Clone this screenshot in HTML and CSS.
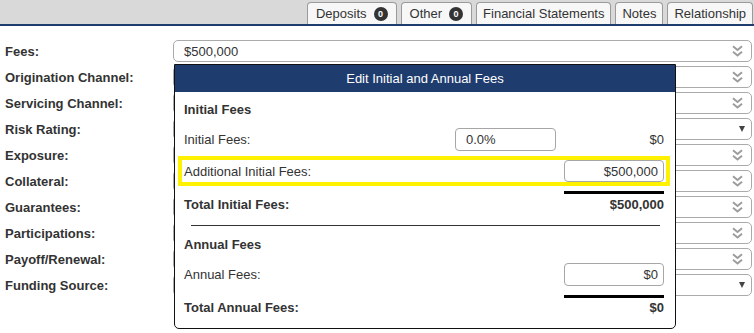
FILE: index.html
```html
<!DOCTYPE html>
<html lang="en">
<head>
    <meta charset="UTF-8">
    <meta name="viewport" content="width=device-width, initial-scale=1.0">
    <title>Loan Details - Fees</title>
    <link rel="stylesheet" href="styles.css">
</head>
<body>
    <div class="tabbar">
        <div class="tab counted">Deposits <span class="badge">0</span></div>
        <div class="tab counted">Other <span class="badge">0</span></div>
        <div class="tab">Financial Statements</div>
        <div class="tab">Notes</div>
        <div class="tab">Relationship</div>
    </div>

    <div class="fields">
        <div class="field-row">
            <label>Fees:</label>
            <div class="select">$500,000
                <svg class="chev" viewBox="0 0 11 12"><polyline points="1,1.2 5.5,5 10,1.2"/><polyline points="1,6.7 5.5,10.5 10,6.7"/></svg>
            </div>
        </div>
        <div class="field-row">
            <label>Origination Channel:</label>
            <div class="select"><svg class="chev" viewBox="0 0 11 12"><polyline points="1,1.2 5.5,5 10,1.2"/><polyline points="1,6.7 5.5,10.5 10,6.7"/></svg></div>
        </div>
        <div class="field-row">
            <label>Servicing Channel:</label>
            <div class="select"><svg class="chev" viewBox="0 0 11 12"><polyline points="1,1.2 5.5,5 10,1.2"/><polyline points="1,6.7 5.5,10.5 10,6.7"/></svg></div>
        </div>
        <div class="field-row">
            <label>Risk Rating:</label>
            <div class="select dropdown"><span class="caret"></span></div>
        </div>
        <div class="field-row">
            <label>Exposure:</label>
            <div class="select"><svg class="chev" viewBox="0 0 11 12"><polyline points="1,1.2 5.5,5 10,1.2"/><polyline points="1,6.7 5.5,10.5 10,6.7"/></svg></div>
        </div>
        <div class="field-row">
            <label>Collateral:</label>
            <div class="select"><svg class="chev" viewBox="0 0 11 12"><polyline points="1,1.2 5.5,5 10,1.2"/><polyline points="1,6.7 5.5,10.5 10,6.7"/></svg></div>
        </div>
        <div class="field-row">
            <label>Guarantees:</label>
            <div class="select"><svg class="chev" viewBox="0 0 11 12"><polyline points="1,1.2 5.5,5 10,1.2"/><polyline points="1,6.7 5.5,10.5 10,6.7"/></svg></div>
        </div>
        <div class="field-row">
            <label>Participations:</label>
            <div class="select"><svg class="chev" viewBox="0 0 11 12"><polyline points="1,1.2 5.5,5 10,1.2"/><polyline points="1,6.7 5.5,10.5 10,6.7"/></svg></div>
        </div>
        <div class="field-row">
            <label>Payoff/Renewal:</label>
            <div class="select"><svg class="chev" viewBox="0 0 11 12"><polyline points="1,1.2 5.5,5 10,1.2"/><polyline points="1,6.7 5.5,10.5 10,6.7"/></svg></div>
        </div>
        <div class="field-row">
            <label>Funding Source:</label>
            <div class="select dropdown"><span class="caret"></span></div>
        </div>
    </div>

    <div class="popup">
        <div class="popup-head">Edit Initial and Annual Fees</div>
        <div class="popup-body">
            <div class="section-title">Initial Fees</div>
            <div class="fee-row">
                <span>Initial Fees:</span>
                <input type="text" class="pct" value="0.0%">
                <span class="amount">$0</span>
            </div>
            <div class="fee-row highlight">
                <span>Additional Initial Fees:</span>
                <span></span>
                <input type="text" value="$500,000">
            </div>
            <div class="sum-line"></div>
            <div class="total-row">
                <span>Total Initial Fees:</span>
                <span>$500,000</span>
            </div>
            <div class="divider"></div>

            <div class="section-title annual">Annual Fees</div>
            <div class="fee-row">
                <span>Annual Fees:</span>
                <span></span>
                <input type="text" value="$0">
            </div>
            <div class="sum-line annual"></div>
            <div class="total-row annual">
                <span>Total Annual Fees:</span>
                <span>$0</span>
            </div>
        </div>
    </div>
</body>
</html>
```

FILE: styles.css
```css
body {
    font-family: "Liberation Sans", Arial, sans-serif;
    font-size: 13px;
    color: #333;
    background-color: white;
    margin: 0;
    padding: 0;
}

/* tab strip */
.tabbar {
    height: 24px;
    background-color: #d9d9d9;
    border-bottom: 2px solid #1f3c6e;
    display: flex;
    justify-content: flex-end;
    align-items: flex-end;
    gap: 4px;
    padding-right: 1px;
}

.tab {
    height: 22px;
    box-sizing: border-box;
    display: flex;
    align-items: center;
    gap: 7px;
    padding: 0 6px;
    background-color: #f7f7f7;
    border: 1px solid #9a9a9a;
    border-bottom: none;
    border-radius: 4px 4px 0 0;
}

.tab.counted {
    padding: 0 8px;
}

.badge {
    width: 14px;
    height: 14px;
    border-radius: 50%;
    background-color: #333;
    color: white;
    font-size: 9px;
    font-weight: bold;
    display: flex;
    align-items: center;
    justify-content: center;
}

/* form rows */
.fields {
    padding: 14px 2px 0 5px;
    display: flex;
    flex-direction: column;
    gap: 4px;
}

.field-row {
    display: grid;
    grid-template-columns: 168px 1fr;
    align-items: center;
    height: 22px;
}

.field-row label {
    font-weight: bold;
}

.select {
    height: 22px;
    box-sizing: border-box;
    border: 1px solid #aaa;
    border-radius: 5px;
    display: flex;
    align-items: center;
    padding: 0 8px 0 10px;
}

.select.dropdown {
    padding-right: 6px;
}

.chev {
    width: 11px;
    height: 12px;
    margin-left: auto;
    fill: none;
    stroke: #9c9c9c;
    stroke-width: 1.9;
}

.caret {
    margin-left: auto;
    width: 0;
    height: 0;
    border-left: 3.5px solid transparent;
    border-right: 3.5px solid transparent;
    border-top: 6px solid #444;
}

/* fee editor overlay */
.popup {
    position: absolute;
    left: 174px;
    top: 64px;
    width: 502px;
    box-sizing: border-box;
    background-color: white;
    border: 1px solid #111;
    border-radius: 0 0 5px 5px;
    padding-bottom: 10px;
}

.popup-head {
    height: 27px;
    line-height: 27px;
    background-color: #1f3c6e;
    color: white;
    text-align: center;
}

.popup-body {
    padding: 0 11px 0 9px;
}

.section-title {
    margin-top: 8px;
    height: 20px;
    line-height: 20px;
    font-weight: bold;
}

.section-title.annual {
    margin-top: 9px;
}

.fee-row {
    margin-top: 8px;
    display: grid;
    grid-template-columns: 1fr 101px 100px;
    gap: 8px;
    align-items: center;
    height: 23px;
}

.fee-row input {
    height: 23px;
    width: 100%;
    box-sizing: border-box;
    border: 1px solid #a6a6a6;
    border-radius: 4px;
    font-family: "Liberation Sans", Arial, sans-serif;
    font-size: 13px;
    color: #333;
    padding: 0 5px;
    text-align: right;
}

.fee-row input.pct {
    text-align: left;
    padding-left: 10px;
}

.amount {
    text-align: right;
}

.fee-row.highlight {
    margin: 5px -6px 0 -6px;
    border: 4px solid #fff200;
    padding: 0 2px;
    height: 22px;
}

.fee-row.highlight input {
    height: 22px;
}

.sum-line {
    margin: 5px 0 0 auto;
    width: 100px;
    height: 3px;
    background-color: #000;
}

.sum-line.annual {
    margin-top: 9px;
}

.total-row {
    margin-top: 1px;
    height: 20px;
    line-height: 20px;
    display: flex;
    justify-content: space-between;
    font-weight: bold;
}

.total-row.annual {
    margin-top: 0;
}

.divider {
    margin: 10px 4px 0 7px;
    height: 1px;
    background-color: #333;
}
```
